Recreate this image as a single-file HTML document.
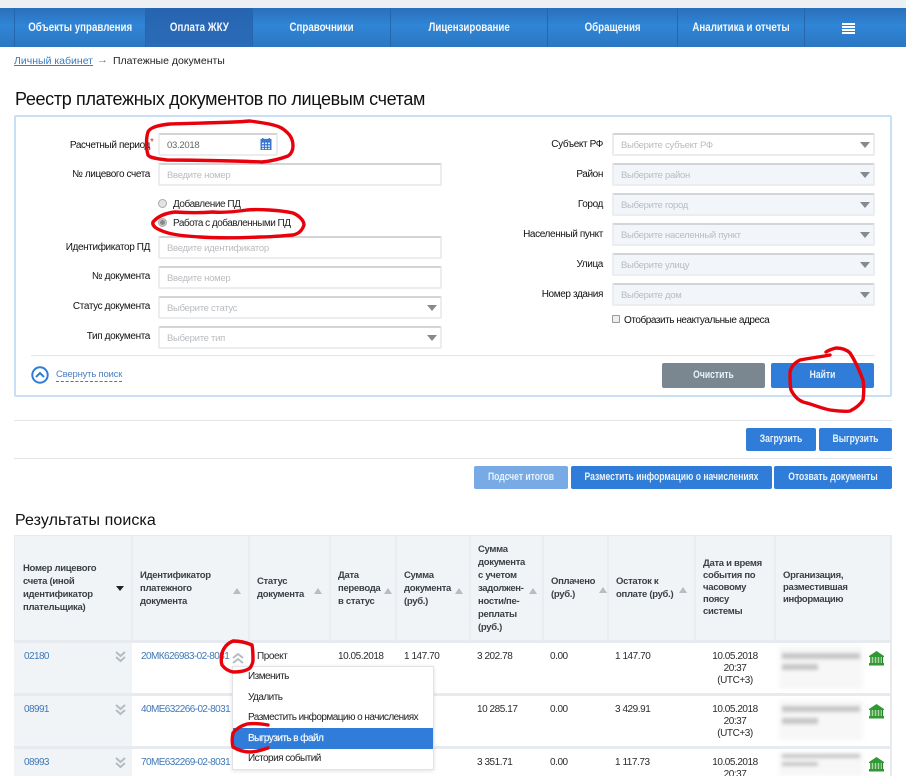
<!DOCTYPE html>
<html lang="ru"><head><meta charset="utf-8"><title>Реестр платежных документов</title>
<style>
html,body{margin:0;padding:0;background:#fff}
#p{position:relative;width:906px;height:776px;overflow:hidden;font-family:"Liberation Sans","Noto Sans CJK SC",sans-serif;font-size:10px;color:#1b1b1b;background:#fff}
#p div,#p a{position:absolute;white-space:nowrap}
.nav{top:8px;height:39px;line-height:39px;text-align:center;color:#f2f7fc;font-size:12px;font-weight:bold;border-left:1px solid #2566ad;box-sizing:border-box}
.nav span{display:inline-block;transform:scaleX(.81)}
.lab{height:14px;line-height:14px;text-align:right;font-size:10px;color:#111;letter-spacing:-.38px}
.lh{right:756px}.rh{right:303px}
.inp{height:23px;line-height:21px;box-sizing:border-box;border:2px solid #ebedef;border-top-color:#d2d4d7;border-radius:2px;background:#fff;padding-left:7px;color:#b9bcc0;font-size:9.5px;letter-spacing:-.28px}
.sel:after{content:"";position:absolute;right:3px;top:7px;border:5px solid transparent;border-top:6px solid #858a8f;border-bottom:0}
.dis{background:#f2f5fa}
.btn{background:#2f7dd8;color:#eaf2fb;font-weight:bold;text-align:center;border-radius:2px;font-size:11px}
.btn span{display:block;margin:0 -60px;transform:scaleX(.78)}
.hr{height:1px;background:#e3e5e7}
.h{font-size:9.5px;font-weight:bold;color:#3a4046;line-height:13px;white-space:pre!important;letter-spacing:-.3px}
.up{border:4.5px solid transparent;border-bottom:6px solid #b5bcc2;border-top:0;width:0;height:0}
.c{font-size:10px;line-height:12px;color:#2b2b2b;letter-spacing:-.45px}
.lnk{font-size:10px;line-height:12px;color:#3f78b8;letter-spacing:-.58px}
.sep{left:14px;width:877px;height:3px;background:#e7eaee}
.side{left:14px;width:118px;background:#f1f4f7}
.m{left:248px;font-size:10px;line-height:12px;color:#222;letter-spacing:-.54px}
.blur{background:#f7f7f7;filter:blur(1.8px)}
.blur div{background:#c6c6c6;height:6px}
.v{top:536px;width:2px;height:105px;background:#e9ecf0}
</style></head><body><div id="p">
<div style="left:0;top:0;width:906px;height:8px;background:#ecf0f3"></div>
<div style="left:0;top:8px;width:906px;height:39px;background:linear-gradient(#2a6fba,#2f85d6 45%,#2b77c2)"></div>
<div class="nav" style="left:14px;width:131px"><span>Объекты управления</span></div>
<div class="nav" style="left:145px;width:107px;background:linear-gradient(#2764b0,#2a6cb8)"><span>Оплата ЖКУ</span></div>
<div class="nav" style="left:252px;width:138px"><span>Справочники</span></div>
<div class="nav" style="left:390px;width:157px"><span>Лицензирование</span></div>
<div class="nav" style="left:547px;width:130px"><span>Обращения</span></div>
<div class="nav" style="left:677px;width:127px"><span>Аналитика и отчеты</span></div>
<div class="nav" style="left:804px;width:102px"></div>
<div style="left:842px;top:23px;width:13px;height:2px;background:#fff;box-shadow:0 3px 0 #fff,0 6px 0 #fff,0 9px 0 #fff"></div>

<a style="left:14px;top:54px;line-height:14px;font-size:10.5px;color:#3a7cc2;text-decoration:underline">Личный кабинет</a>
<div style="left:97px;top:53px;line-height:14px;font-size:11px;color:#777">→</div>
<div style="left:113px;top:54px;line-height:14px;font-size:10.5px;color:#222">Платежные документы</div>
<div style="left:15px;top:88px;line-height:22px;font-size:18px;color:#111;letter-spacing:-.35px">Реестр платежных документов по лицевым счетам</div>

<div style="left:14px;top:115px;width:878px;height:282px;box-sizing:border-box;border:2px solid #c8dff5;border-radius:2px"></div>

<div class="lab lh" style="top:139px">Расчетный период</div>
<div style="left:150px;top:137px;color:#c33;font-size:10px;line-height:12px">*</div>
<div class="inp" style="left:158px;top:133px;width:120px;color:#666">03.2018</div>
<svg style="position:absolute;left:260px;top:138px" width="12" height="12" viewBox="0 0 12 13" preserveAspectRatio="none"><rect x="0.5" y="1" width="11" height="12" fill="#3a78d0"/><rect x="2" y="0" width="1.5" height="2.5" fill="#3a78d0"/><rect x="8.5" y="0" width="1.5" height="2.5" fill="#3a78d0"/><g fill="#dfe9f7"><rect x="2" y="5" width="2" height="1.6"/><rect x="5" y="5" width="2" height="1.6"/><rect x="8" y="5" width="2" height="1.6"/><rect x="2" y="8" width="2" height="1.6"/><rect x="5" y="8" width="2" height="1.6"/><rect x="8" y="8" width="2" height="1.6"/><rect x="2" y="10.700" width="2" height="1.4"/><rect x="5" y="10.700" width="2" height="1.4"/><rect x="8" y="10.700" width="2" height="1.4"/></g></svg>

<div class="lab lh" style="top:168px">№ лицевого счета</div>
<div class="inp" style="left:158px;top:163px;width:284px">Введите номер</div>

<div style="left:158px;top:199px;width:7px;height:7px;border-radius:50%;background:#e3e3e3;border:1px solid #aaa"></div>
<div style="left:173px;top:198px;line-height:14px;font-size:10px;color:#222;letter-spacing:-.46px">Добавление ПД</div>
<div style="left:158px;top:218px;width:7px;height:7px;border-radius:50%;background:#ccc;border:1px solid #aaa"></div>
<div style="left:160px;top:220px;width:5px;height:5px;border-radius:50%;background:#888"></div>
<div style="left:173px;top:217px;line-height:14px;font-size:10px;color:#222;letter-spacing:-.52px">Работа с добавленными ПД</div>

<div class="lab lh" style="top:241px">Идентификатор ПД</div>
<div class="inp" style="left:158px;top:236px;width:284px">Введите идентификатор</div>
<div class="lab lh" style="top:270px">№ документа</div>
<div class="inp" style="left:158px;top:266px;width:284px">Введите номер</div>
<div class="lab lh" style="top:300px">Статус документа</div>
<div class="inp sel" style="left:158px;top:296px;width:284px">Выберите статус</div>
<div class="lab lh" style="top:330px">Тип документа</div>
<div class="inp sel" style="left:158px;top:326px;width:284px">Выберите тип</div>

<div class="lab rh" style="top:138px">Субъект РФ</div>
<div class="inp sel" style="left:612px;top:133px;width:263px">Выберите субъект РФ</div>
<div class="lab rh" style="top:168px">Район</div>
<div class="inp sel dis" style="left:612px;top:163px;width:263px">Выберите район</div>
<div class="lab rh" style="top:198px">Город</div>
<div class="inp sel dis" style="left:612px;top:193px;width:263px">Выберите город</div>
<div class="lab rh" style="top:228px">Населенный пункт</div>
<div class="inp sel dis" style="left:612px;top:223px;width:263px">Выберите населенный пункт</div>
<div class="lab rh" style="top:258px">Улица</div>
<div class="inp sel dis" style="left:612px;top:253px;width:263px">Выберите улицу</div>
<div class="lab rh" style="top:288px">Номер здания</div>
<div class="inp sel dis" style="left:612px;top:283px;width:263px">Выберите дом</div>
<div style="left:612px;top:315px;width:6px;height:6px;border:1px solid #999;border-radius:1px;background:#eee"></div>
<div style="left:624px;top:314px;line-height:14px;font-size:10px;color:#111;letter-spacing:-.45px">Отобразить неактуальные адреса</div>

<div class="hr" style="left:31px;top:355px;width:844px"></div>
<svg style="position:absolute;left:31px;top:366px" width="18" height="18" viewBox="0 0 18 18"><circle cx="9" cy="9" r="7.700" fill="#fff" stroke="#2f7dd8" stroke-width="2"/><path d="M5 11 L9 7 L13 11" fill="none" stroke="#2f7dd8" stroke-width="2"/></svg>
<div style="left:56px;top:369px;line-height:12px;font-size:9.5px;color:#4d7fc4;letter-spacing:-.2px;border-bottom:1px dashed #2f7dd8">Свернуть поиск</div>
<div class="btn" style="left:662px;top:363px;width:103px;height:25px;line-height:25px;background:#7a8791"><span>Очистить</span></div>
<div class="btn" style="left:771px;top:363px;width:103px;height:25px;line-height:25px"><span>Найти</span></div>

<div class="hr" style="left:14px;top:420px;width:878px"></div>
<div class="btn" style="left:746px;top:428px;width:70px;height:23px;line-height:23px"><span>Загрузить</span></div>
<div class="btn" style="left:819px;top:428px;width:73px;height:23px;line-height:23px"><span>Выгрузить</span></div>
<div class="hr" style="left:14px;top:458px;width:878px"></div>
<div class="btn" style="left:474px;top:466px;width:94px;height:23px;line-height:23px;background:#78abe6"><span>Подсчет итогов</span></div>
<div class="btn" style="left:571px;top:466px;width:201px;height:23px;line-height:23px"><span>Разместить информацию о начислениях</span></div>
<div class="btn" style="left:774px;top:466px;width:118px;height:23px;line-height:23px"><span>Отозвать документы</span></div>

<div style="left:15px;top:511px;line-height:20px;font-size:16px;color:#111;letter-spacing:.08px">Результаты поиска</div>

<div style="left:14px;top:535px;width:877px;height:106px;background:#f1f4f7;border:1px solid #e7eaee;box-sizing:border-box"></div>
<div class="v" style="left:131px"></div>
<div class="v" style="left:248px"></div>
<div class="v" style="left:329px"></div>
<div class="v" style="left:395px"></div>
<div class="v" style="left:469px"></div>
<div class="v" style="left:542px"></div>
<div class="v" style="left:607px"></div>
<div class="v" style="left:694px"></div>
<div class="v" style="left:774px"></div>

<div class="h" style="left:23px;top:562px">Номер лицевого
счета (иной
идентификатор
плательщика)</div>
<div style="left:116px;top:586px;width:0;height:0;border:4px solid transparent;border-top:5px solid #222;border-bottom:0"></div>
<div class="h" style="left:140px;top:569px">Идентификатор
платежного
документа</div>
<div class="up" style="left:233px;top:588px"></div>
<div class="h" style="left:257px;top:575px">Статус
документа</div>
<div class="up" style="left:314px;top:588px"></div>
<div class="h" style="left:338px;top:569px">Дата
перевода
в статус</div>
<div class="up" style="left:384px;top:588px"></div>
<div class="h" style="left:404px;top:569px">Сумма
документа
(руб.)</div>
<div class="up" style="left:455px;top:588px"></div>
<div class="h" style="left:478px;top:543px">Сумма
документа
с учетом
задолжен-
ности/пе-
реплаты
(руб.)</div>
<div class="up" style="left:529px;top:588px"></div>
<div class="h" style="left:551px;top:575px">Оплачено
(руб.)</div>
<div class="up" style="left:599px;top:587px"></div>
<div class="h" style="left:616px;top:575px">Остаток к
оплате (руб.)</div>
<div class="up" style="left:679px;top:587px"></div>
<div class="h" style="left:703px;top:558px;line-height:12px">Дата и время
события по
часовому
поясу
системы</div>
<div class="h" style="left:783px;top:570px;line-height:12px">Организация,
разместившая
информацию</div>

<div style="left:14px;top:641px;width:877px;height:135px;background:#fff"></div>
<div class="side" style="top:641px;height:135px"></div>
<div class="sep" style="top:641px;height:2px"></div>
<div class="sep" style="top:693px"></div>
<div class="sep" style="top:746px"></div>
<div style="left:890px;top:535px;width:2px;height:241px;background:#e7eaee"></div>

<div class="lnk" style="left:24px;top:651px">02180</div>
<div class="lnk" style="left:141px;top:651px">20МК626983-02-8031</div>
<div class="c" style="left:257px;top:651px">Проект</div>
<div class="c" style="left:338px;top:651px">10.05.2018</div>
<div class="c" style="left:404px;top:651px">1 147.70</div>
<div class="c" style="left:477px;top:651px">3 202.78</div>
<div class="c" style="left:550px;top:651px">0.00</div>
<div class="c" style="left:615px;top:651px">1 147.70</div>
<div class="c" style="left:695px;top:651px;width:80px;text-align:center">10.05.2018</div>
<div class="c" style="left:695px;top:663px;width:80px;text-align:center">20:37</div>
<div class="c" style="left:695px;top:675px;width:80px;text-align:center">(UTC+3)</div>

<div class="lnk" style="left:24px;top:704px">08991</div>
<div class="lnk" style="left:141px;top:704px">40МЕ632266-02-8031</div>
<div class="c" style="left:477px;top:704px">10 285.17</div>
<div class="c" style="left:550px;top:704px">0.00</div>
<div class="c" style="left:615px;top:704px">3 429.91</div>
<div class="c" style="left:695px;top:704px;width:80px;text-align:center">10.05.2018</div>
<div class="c" style="left:695px;top:716px;width:80px;text-align:center">20:37</div>
<div class="c" style="left:695px;top:728px;width:80px;text-align:center">(UTC+3)</div>

<div class="lnk" style="left:24px;top:757px">08993</div>
<div class="lnk" style="left:141px;top:757px">70МЕ632269-02-8031</div>
<div class="c" style="left:477px;top:757px">3 351.71</div>
<div class="c" style="left:550px;top:757px">0.00</div>
<div class="c" style="left:615px;top:757px">1 117.73</div>
<div class="c" style="left:695px;top:757px;width:80px;text-align:center">10.05.2018</div>
<div class="c" style="left:695px;top:769px;width:80px;text-align:center">20:37</div>

<svg style="position:absolute;left:0;top:0" width="906" height="776" viewBox="0 0 906 776">
<g fill="none" stroke="#b4bcc3" stroke-width="2"><path d="M116 652l4.500 4 4.500-4M116 657l4.500 4 4.500-4"/><path d="M116 705l4.500 4 4.500-4M116 710l4.500 4 4.500-4"/><path d="M116 758l4.500 4 4.500-4M116 763l4.500 4 4.500-4"/><path d="M233 658l5-4 5 4M233 663l5-4 5 4"/></g>
<g id="b1"><path d="M876.500 651l7.500 5v1h-15v-1z" fill="#2f9a33"/><rect x="869" y="663" width="15" height="2.500" fill="#2f9a33"/><rect x="870" y="657" width="13" height="6" fill="#a8d9a2"/><path d="M871 657v6M874 657v6M877 657v6M880 657v6M882.500 657v6" stroke="#1f7f24" stroke-width="1.200"/></g>
<use href="#b1" y="53"/><use href="#b1" y="106"/>
</svg>

<div class="blur" style="left:779px;top:646px;width:84px;height:43px"><div style="left:3px;top:7px;width:78px"></div><div style="left:3px;top:18px;width:36px"></div></div>
<div class="blur" style="left:779px;top:700px;width:84px;height:40px"><div style="left:3px;top:6px;width:78px"></div><div style="left:3px;top:18px;width:36px"></div></div>
<div class="blur" style="left:779px;top:752px;width:84px;height:24px"><div style="left:3px;top:2px;width:78px;height:4px"></div><div style="left:3px;top:10px;width:36px;height:4px"></div></div>

<div style="left:232px;top:666px;width:202px;height:104px;box-sizing:border-box;background:#fff;border:1px solid #dfe3e8;box-shadow:0 1px 4px rgba(0,0,0,.12)"></div>
<div style="left:233px;top:728px;width:200px;height:21px;background:#2f7dd8"></div>
<div class="m" style="top:671px">Изменить</div>
<div class="m" style="top:692px">Удалить</div>
<div class="m" style="top:712px">Разместить информацию о начислениях</div>
<div class="m" style="top:733px;color:#f2f7fc;-webkit-text-stroke:.2px #f2f7fc">Выгрузить в файл</div>
<div class="m" style="top:753px">История событий</div>

<svg style="position:absolute;left:0;top:0" width="906" height="776" viewBox="0 0 906 776">
<g fill="none" stroke="#e8000b" stroke-width="3.400" stroke-linejoin="round" stroke-linecap="round">
<path d="M148 132C150 127 160 125 170 124C190 123 230 123 250 121C265 123 278 125 283 129C290 134 293 139 293 146C293 151 291 154 288 156C280 159 272 161 262 162C240 161 190 160 167 160C158 159 150 158 148 155C146 148 146 138 148 132Z"/>
<path d="M153 222C158 216 166 213 175 212C190 213 200 213 213 212C225 213 240 211 247 210C258 209 280 210 293 213C300 216 304 221 304 225C302 231 298 234 293 235C280 236 270 237 260 237C240 238 215 238 200 237C185 236 170 235 160 230C155 228 152 225 153 222Z"/>
<path d="M830 355C820 357 810 358 800 360C794 363 791 367 790 372C790 380 790 386 791 390C794 396 798 400 803 402C812 404 820 408 830 410C838 411 845 412 850 411C856 408 860 405 863 400C864 393 864 386 863 380C860 372 856 362 850 353C846 349 841 348 836 348C832 349 829 350 826 352"/>
<path d="M252 645C245 642 240 641 233 641C228 643 224 647 222 653C221 658 221 662 222 665C225 669 228 671 233 672C240 672 246 671 250 668C252 665 253 662 253 660C253 655 253 650 252 645Z"/>
<path d="M268 725C262 724 254 723 247 724C240 726 236 729 233 733C232 738 232 743 233 747C238 750 244 752 250 752C256 752 262 750 268 748"/>
</g></svg>
</div></body></html>
